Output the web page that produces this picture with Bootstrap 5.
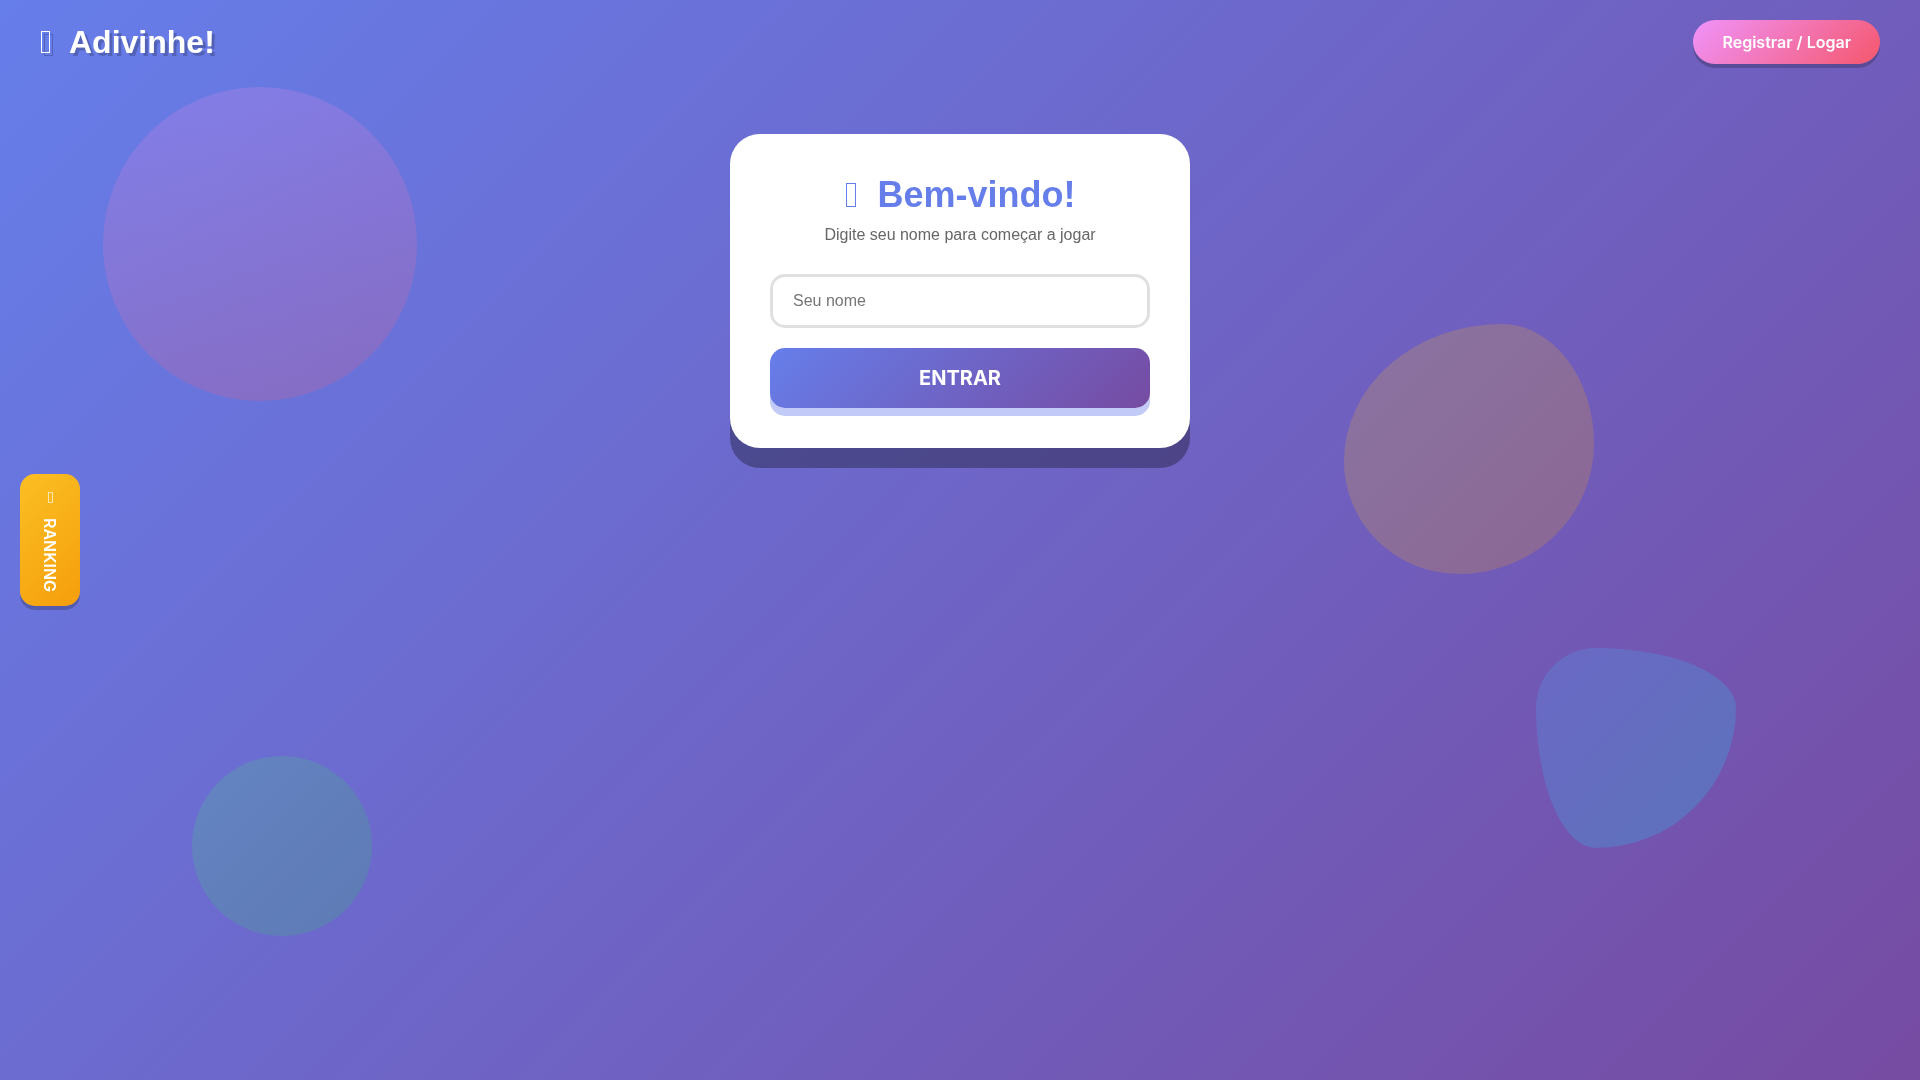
<!DOCTYPE html>
<html lang="pt-BR">
<head>
<meta charset="utf-8">
<meta name="viewport" content="width=device-width, initial-scale=1">
<title>Adivinhe!</title>
<link href="https://cdn.jsdelivr.net/npm/bootstrap@5.3.0/dist/css/bootstrap.min.css" rel="stylesheet">
<style>
body {
  min-height: 100vh;
  font-family: "Liberation Sans", Arial, sans-serif;
  background: linear-gradient(135deg, #667eea 0%, #764ba2 100%) no-repeat;
}
/* Decorative shapes floating behind the content */
.scene { z-index: -1; }
.shape { position: absolute; opacity: .2; }
.shape-pink { width: 314px; height: 314px; left: 103px; top: 87px; border-radius: 50%; background: linear-gradient(170deg, #f093fb, #f5576c); }
.shape-amber { width: 250px; height: 250px; left: 70%; top: 30%; border-radius: 63% 37% 54% 46% / 55% 48% 52% 45%; background: linear-gradient(135deg, #fbbf24, #f59e0b); }
.shape-blue { width: 200px; height: 200px; left: 80%; top: 60%; border-radius: 30% 70% 70% 30% / 30% 30% 70% 70%; background: linear-gradient(135deg, #4facfe, #00f2fe); }
.shape-green { width: 180px; height: 180px; left: 10%; top: 70%; border-radius: 50%; background: linear-gradient(135deg, #4ade80, #22c55e); }

.topbar { padding: 20px 40px; }
.brand { gap: 18px; color: #fff; font-size: 32px; line-height: 36px; font-weight: 700; text-shadow: 3px 3px 0 rgba(0,0,0,.2); }
.brand:hover { color: #fff; }
.brand svg { filter: drop-shadow(3px 3px 0 rgba(0,0,0,.2)); }
.btn-login, .btn-enter, .btn-rank { border: 0; color: #fff; font-family: Inter, sans-serif; }
.btn-login { padding: 12px 29px; border-radius: 50px; font-size: 16px; line-height: 20px; font-weight: 600; background: linear-gradient(135deg, #f093fb, #f5576c); box-shadow: 0 4px 0 rgba(0,0,0,.2); }

.welcome { width: 100%; max-width: 460px; margin-top: 50px; padding: 40px; border-radius: 30px; box-shadow: 0 20px 0 rgba(0,0,0,.3); }
.welcome-title { gap: 21px; margin-bottom: 8px; color: #667eea; font-size: 36px; line-height: 42px; font-weight: 700; }
.welcome-text { margin-bottom: 28px; color: #666; font-size: 16px; line-height: 22px; }
.name-field { height: 54px; padding: 0 20px; border: 3px solid #e0e0e0; border-radius: 15px; font-size: 16px; }
.name-field::placeholder { color: #757575; }
.btn-enter { height: 60px; margin-top: 20px; border-radius: 15px; font-size: 20px; font-weight: 700; background: linear-gradient(135deg, #667eea, #764ba2); box-shadow: 0 8px 0 rgba(102,126,234,.4); }

.btn-rank { position: fixed; left: 20px; top: 50%; transform: translateY(-50%); width: 60px; height: 132px; padding: 18px 0 16px; gap: 15px; border-radius: 15px; font-size: 16px; line-height: 20px; font-weight: 600; background: linear-gradient(135deg, #fbbf24, #f59e0b); box-shadow: 0 4px 0 rgba(0,0,0,.2); }
.btn-rank span { writing-mode: vertical-rl; }
</style>
</head>
<body>
<div class="scene position-fixed top-0 start-0 w-100 h-100 overflow-hidden" aria-hidden="true">
  <div class="shape shape-pink"></div>
  <div class="shape shape-amber"></div>
  <div class="shape shape-blue"></div>
  <div class="shape shape-green"></div>
</div>

<header class="topbar d-flex justify-content-between align-items-center">
  <a href="#" class="brand d-flex align-items-center text-decoration-none">
    <svg width="11" height="22" fill="none" stroke="currentColor" aria-hidden="true"><rect x="1.5" y=".5" width="8" height="21"/></svg>
    <span>Adivinhe!</span>
  </a>
  <button type="button" class="btn-login">Registrar / Logar</button>
</header>

<button type="button" class="btn-rank d-flex flex-column align-items-center">
  <svg class="flex-shrink-0" width="6" height="11" fill="none" stroke="currentColor" stroke-opacity=".65" aria-hidden="true"><rect x="1.5" y=".5" width="4" height="10"/></svg>
  <span>RANKING</span>
</button>

<main class="d-flex justify-content-center">
  <form class="welcome bg-white">
    <h1 class="welcome-title d-flex justify-content-center align-items-center">
      <svg width="12" height="24" fill="none" stroke="currentColor" aria-hidden="true"><rect x="1.5" y=".5" width="9" height="23"/></svg>
      <span>Bem-vindo!</span>
    </h1>
    <p class="welcome-text text-center">Digite seu nome para começar a jogar</p>
    <input type="text" id="nome" class="name-field form-control" placeholder="Seu nome" aria-label="Seu nome">
    <button type="submit" class="btn-enter w-100">ENTRAR</button>
  </form>
</main>
<script src="https://cdn.jsdelivr.net/npm/bootstrap@5.3.0/dist/js/bootstrap.bundle.min.js"></script>
</body>
</html>
